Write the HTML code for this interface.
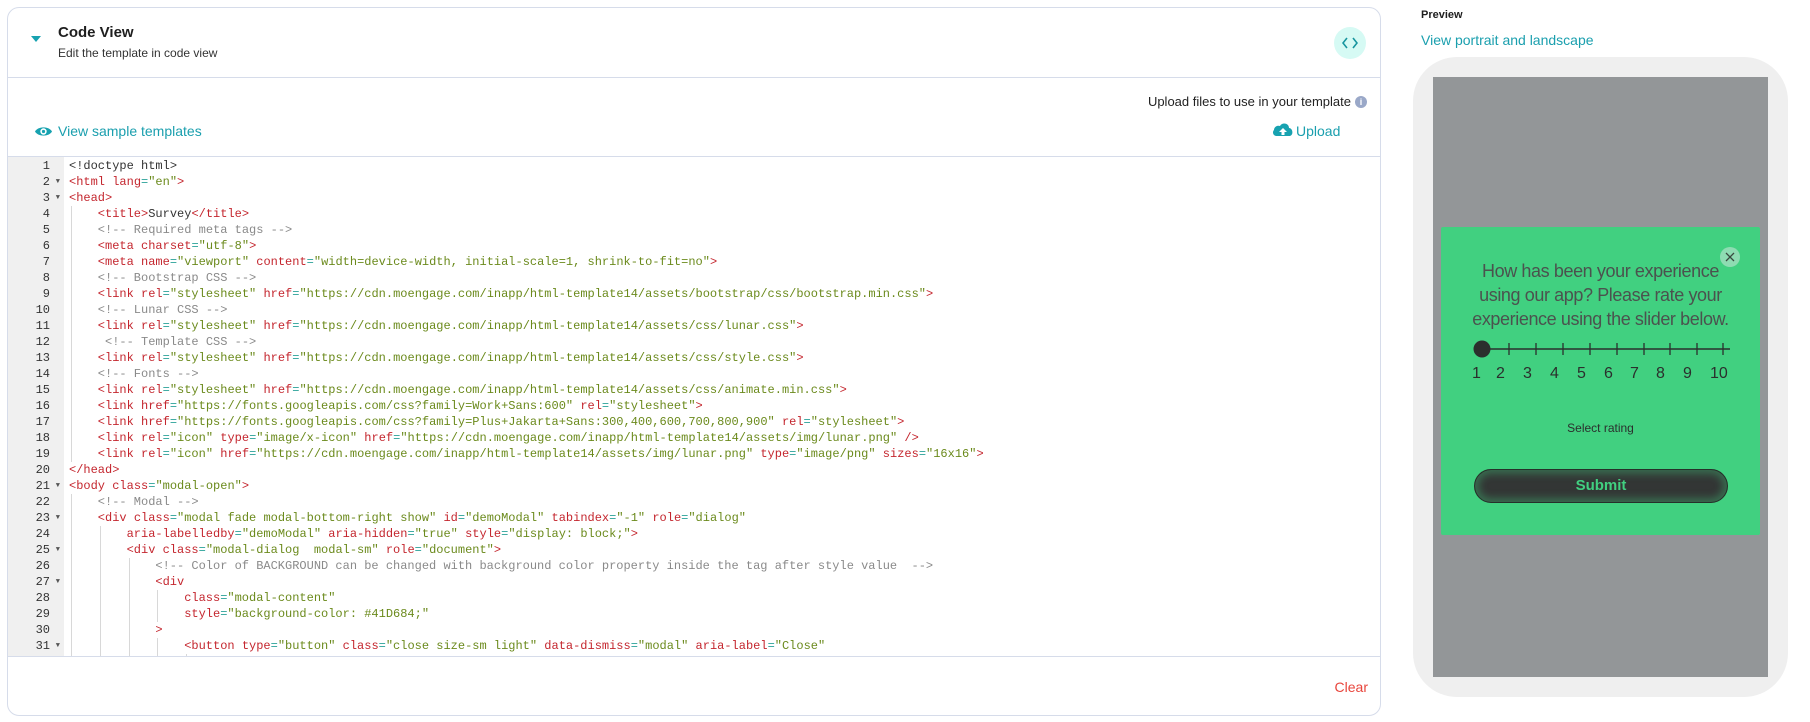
<!DOCTYPE html>
<html><head><meta charset="utf-8"><style>
*{box-sizing:border-box;margin:0;padding:0}
body{width:1810px;height:722px;background:#fff;font-family:"Liberation Sans",sans-serif;position:relative;overflow:hidden;color:#222}
.abs{position:absolute}
.card{left:7px;top:7px;width:1374px;height:709px;border:1px solid #d6dcea;border-radius:12px;overflow:hidden}
.code{position:absolute;left:0;top:148px;width:1372px;height:501px;border-top:1px solid #d6dcea;border-bottom:1px solid #d6dcea;overflow:hidden}
.gut{position:absolute;left:0;top:0;width:56px;height:100%;background:#f0f0f0}
.ln{position:absolute;left:0;width:56px;height:16px;font:12px/16px "Liberation Mono",monospace;color:#333}
.ln span.n{position:absolute;right:14px}
.ln span.f{position:absolute;right:4px;font-size:7px;color:#555}
.cl{position:absolute;left:61px;height:16px;font:12px/16px "Liberation Mono",monospace;color:#333;white-space:pre}
.t{color:#c4262e}.v{color:#6b8a1c}.e{color:#2aa198}.c{color:#8a8a8a}
.g{position:absolute;width:1px;height:16px;background:#d8d8d8}
.teal{color:#1a9fae}
</style></head><body>
<div class="abs card">
  <svg class="abs" style="left:22px;top:27px" width="12" height="8"><path d="M1 1h10l-5 6z" fill="#17a2b0"/></svg>
  <div class="abs" style="left:50px;top:16px;font-size:15px;font-weight:bold;color:#1e1e1e">Code View</div>
  <div class="abs" style="left:50px;top:38px;font-size:12px;color:#333">Edit the template in code view</div>
  <div class="abs" style="left:1326px;top:19px;width:32px;height:32px;border-radius:50%;background:#d6faf4"></div>
  <svg class="abs" style="left:1334px;top:29px" width="16" height="12"><path d="M5 1L1 6l4 5M11 1l4 5-4 5" stroke="#17959f" stroke-width="1.6" fill="none"/></svg>
  <div class="abs" style="left:0;top:69px;width:100%;height:1px;background:#d6dcea"></div>
  <div class="abs" style="left:1000px;top:86px;width:343px;text-align:right;font-size:13px;color:#222">Upload files to use in your template</div>
  <div class="abs" style="left:1347px;top:88px;width:12px;height:12px;border-radius:50%;background:#9aa8c8;color:#fff;font-size:9px;line-height:12px;text-align:center;font-weight:bold">i</div>
  <svg class="abs" style="left:26px;top:117px" width="19" height="13"><path d="M1 6.5C4 1 15 1 18 6.5 15 12 4 12 1 6.5z" fill="#17a2b0"/><circle cx="9.5" cy="6.5" r="3.2" fill="#fff"/><circle cx="9.5" cy="6.5" r="1.6" fill="#17a2b0"/></svg>
  <div class="abs teal" style="left:50px;top:115px;font-size:14px">View sample templates</div>
  <svg class="abs" style="left:1264px;top:114px" width="22" height="15"><path d="M5 14C1 14 0 10 2 8 2 5 5 3 8 4 10 0 17 1 17 6 21 6 22 14 17 14z" fill="#17a2b0"/><path d="M11 6l-4 4h2.5v3h3v-3H15z" fill="#fff"/></svg>
  <div class="abs teal" style="left:1288px;top:115px;font-size:14px">Upload</div>
  <div class="code">
    <div class="gut"></div>
    <div id="lines"></div>
  </div>
  <div class="abs" style="left:1320px;top:671px;font-size:14px;color:#e8453c;width:40px;text-align:right">Clear</div>
</div>

<div class="abs" style="left:1421px;top:9px;font-size:11px;font-weight:bold;color:#1e1e1e">Preview</div>
<div class="abs teal" style="left:1421px;top:32px;font-size:14px">View portrait and landscape</div>
<div class="abs" style="left:1413px;top:57px;width:375px;height:640px;background:#efefef;border-radius:44px"></div>
<div class="abs" style="left:1433px;top:77px;width:335px;height:600px;background:#939698"></div>
<div class="abs" style="left:1441px;top:227px;width:319px;height:308px;background:#41d080;border-radius:2px"></div>
<div class="abs" style="left:1720px;top:247px;width:20px;height:20px;border-radius:50%;background:#8edcb2"></div>
<svg class="abs" style="left:1724px;top:251px" width="12" height="12"><path d="M2 2l8 8M10 2l-8 8" stroke="#3a4a40" stroke-width="1.3"/></svg>
<div class="abs" style="left:1441px;top:259px;width:319px;text-align:center;font-size:18px;line-height:24px;color:#4b524e;letter-spacing:-0.4px;white-space:nowrap">How has been your experience<br>using our app? Please rate your<br>experience using the slider below.</div>
<svg class="abs" style="left:1470px;top:338px" width="265" height="24">
<line x1="12" y1="11" x2="260" y2="11" stroke="#2b2f2d" stroke-width="1.5"/>
<g stroke="#2b2f2d" stroke-width="1.3">
<line x1="39" y1="5" x2="39" y2="17"/><line x1="66" y1="5" x2="66" y2="17"/><line x1="93" y1="5" x2="93" y2="17"/><line x1="120" y1="5" x2="120" y2="17"/><line x1="147" y1="5" x2="147" y2="17"/><line x1="174" y1="5" x2="174" y2="17"/><line x1="200" y1="5" x2="200" y2="17"/><line x1="227" y1="5" x2="227" y2="17"/><line x1="253" y1="5" x2="253" y2="17"/></g>
<circle cx="12" cy="11" r="8.5" fill="#2b2f2d"/></svg>
<div class="abs" style="left:1466px;top:365px;width:270px;height:20px;font-size:16px;color:#2b2f2d">
<span class="abs" style="left:6px">1</span><span class="abs" style="left:30px">2</span><span class="abs" style="left:57px">3</span><span class="abs" style="left:84px">4</span><span class="abs" style="left:111px">5</span><span class="abs" style="left:138px">6</span><span class="abs" style="left:164px">7</span><span class="abs" style="left:190px">8</span><span class="abs" style="left:217px">9</span><span class="abs" style="left:244px">10</span></div>
<div class="abs" style="left:1452px;top:421px;width:297px;text-align:center;font-size:12px;color:#2b2f2d">Select rating</div>
<div class="abs" style="left:1474px;top:469px;width:254px;height:34px;border-radius:17px;background:#333635;border:1px solid #26302a;box-shadow:inset 0 0 8px 4px rgba(65,208,128,.35);text-align:center;line-height:32px;font-size:15px;font-weight:bold;color:#41d080">Submit</div>

<script>
var L=[
[0,'<span>&lt;!doctype html&gt;</span>'],
[0,'<span class="t">&lt;html</span> <span class="t">lang</span><span class="e">=</span><span class="v">"en"</span><span class="t">&gt;</span>',1],
[0,'<span class="t">&lt;head&gt;</span>',1],
[1,'<span class="t">&lt;title&gt;</span>Survey<span class="t">&lt;/title&gt;</span>'],
[1,'<span class="c">&lt;!-- Required meta tags --&gt;</span>'],
[1,'<span class="t">&lt;meta</span> <span class="t">charset</span><span class="e">=</span><span class="v">"utf-8"</span><span class="t">&gt;</span>'],
[1,'<span class="t">&lt;meta</span> <span class="t">name</span><span class="e">=</span><span class="v">"viewport"</span> <span class="t">content</span><span class="e">=</span><span class="v">"width=device-width, initial-scale=1, shrink-to-fit=no"</span><span class="t">&gt;</span>'],
[1,'<span class="c">&lt;!-- Bootstrap CSS --&gt;</span>'],
[1,'<span class="t">&lt;link</span> <span class="t">rel</span><span class="e">=</span><span class="v">"stylesheet"</span> <span class="t">href</span><span class="e">=</span><span class="v">"https://cdn.moengage.com/inapp/html-template14/assets/bootstrap/css/bootstrap.min.css"</span><span class="t">&gt;</span>'],
[1,'<span class="c">&lt;!-- Lunar CSS --&gt;</span>'],
[1,'<span class="t">&lt;link</span> <span class="t">rel</span><span class="e">=</span><span class="v">"stylesheet"</span> <span class="t">href</span><span class="e">=</span><span class="v">"https://cdn.moengage.com/inapp/html-template14/assets/css/lunar.css"</span><span class="t">&gt;</span>'],
[1,' <span class="c">&lt;!-- Template CSS --&gt;</span>'],
[1,'<span class="t">&lt;link</span> <span class="t">rel</span><span class="e">=</span><span class="v">"stylesheet"</span> <span class="t">href</span><span class="e">=</span><span class="v">"https://cdn.moengage.com/inapp/html-template14/assets/css/style.css"</span><span class="t">&gt;</span>'],
[1,'<span class="c">&lt;!-- Fonts --&gt;</span>'],
[1,'<span class="t">&lt;link</span> <span class="t">rel</span><span class="e">=</span><span class="v">"stylesheet"</span> <span class="t">href</span><span class="e">=</span><span class="v">"https://cdn.moengage.com/inapp/html-template14/assets/css/animate.min.css"</span><span class="t">&gt;</span>'],
[1,'<span class="t">&lt;link</span> <span class="t">href</span><span class="e">=</span><span class="v">"https://fonts.googleapis.com/css?family=Work+Sans:600"</span> <span class="t">rel</span><span class="e">=</span><span class="v">"stylesheet"</span><span class="t">&gt;</span>'],
[1,'<span class="t">&lt;link</span> <span class="t">href</span><span class="e">=</span><span class="v">"https://fonts.googleapis.com/css?family=Plus+Jakarta+Sans:300,400,600,700,800,900"</span> <span class="t">rel</span><span class="e">=</span><span class="v">"stylesheet"</span><span class="t">&gt;</span>'],
[1,'<span class="t">&lt;link</span> <span class="t">rel</span><span class="e">=</span><span class="v">"icon"</span> <span class="t">type</span><span class="e">=</span><span class="v">"image/x-icon"</span> <span class="t">href</span><span class="e">=</span><span class="v">"https://cdn.moengage.com/inapp/html-template14/assets/img/lunar.png"</span> <span class="t">/&gt;</span>'],
[1,'<span class="t">&lt;link</span> <span class="t">rel</span><span class="e">=</span><span class="v">"icon"</span> <span class="t">href</span><span class="e">=</span><span class="v">"https://cdn.moengage.com/inapp/html-template14/assets/img/lunar.png"</span> <span class="t">type</span><span class="e">=</span><span class="v">"image/png"</span> <span class="t">sizes</span><span class="e">=</span><span class="v">"16x16"</span><span class="t">&gt;</span>'],
[0,'<span class="t">&lt;/head&gt;</span>'],
[0,'<span class="t">&lt;body</span> <span class="t">class</span><span class="e">=</span><span class="v">"modal-open"</span><span class="t">&gt;</span>',1],
[1,'<span class="c">&lt;!-- Modal --&gt;</span>'],
[1,'<span class="t">&lt;div</span> <span class="t">class</span><span class="e">=</span><span class="v">"modal fade modal-bottom-right show"</span> <span class="t">id</span><span class="e">=</span><span class="v">"demoModal"</span> <span class="t">tabindex</span><span class="e">=</span><span class="v">"-1"</span> <span class="t">role</span><span class="e">=</span><span class="v">"dialog"</span>',1],
[2,'<span class="t">aria-labelledby</span><span class="e">=</span><span class="v">"demoModal"</span> <span class="t">aria-hidden</span><span class="e">=</span><span class="v">"true"</span> <span class="t">style</span><span class="e">=</span><span class="v">"display: block;"</span><span class="t">&gt;</span>'],
[2,'<span class="t">&lt;div</span> <span class="t">class</span><span class="e">=</span><span class="v">"modal-dialog  modal-sm"</span> <span class="t">role</span><span class="e">=</span><span class="v">"document"</span><span class="t">&gt;</span>',1],
[3,'<span class="c">&lt;!-- Color of BACKGROUND can be changed with background color property inside the tag after style value  --&gt;</span>'],
[3,'<span class="t">&lt;div</span>',1],
[4,'<span class="t">class</span><span class="e">=</span><span class="v">"modal-content"</span>'],
[4,'<span class="t">style</span><span class="e">=</span><span class="v">"background-color: #41D684;"</span>'],
[3,'<span class="t">&gt;</span>'],
[4,'<span class="t">&lt;button</span> <span class="t">type</span><span class="e">=</span><span class="v">"button"</span> <span class="t">class</span><span class="e">=</span><span class="v">"close size-sm light"</span> <span class="t">data-dismiss</span><span class="e">=</span><span class="v">"modal"</span> <span class="t">aria-label</span><span class="e">=</span><span class="v">"Close"</span>',1],
[5,'<span class="t">&lt;img</span> <span class="t">src</span><span class="e">=</span><span class="v">"data:image/svg+xml;charset=utf8,%3Csvg xmlns=\'http://www.w3.org/2000/svg\'"</span>']
];
var h='';
for(var i=0;i<L.length;i++){
 var y=1+16*i;
 h+='<div class="ln" style="top:'+y+'px"><span class="n">'+(i+1)+'</span>'+(L[i][2]?'<span class="f">&#9660;</span>':'')+'</div>';
 for(var k=0;k<L[i][0];k++) h+='<div class="g" style="left:'+(63+k*28.8)+'px;top:'+y+'px"></div>';
 h+='<div class="cl" style="top:'+y+'px;left:'+(61+L[i][0]*28.8)+'px">'+L[i][1]+'</div>';
}
document.getElementById('lines').innerHTML=h;
</script>
</body></html>
